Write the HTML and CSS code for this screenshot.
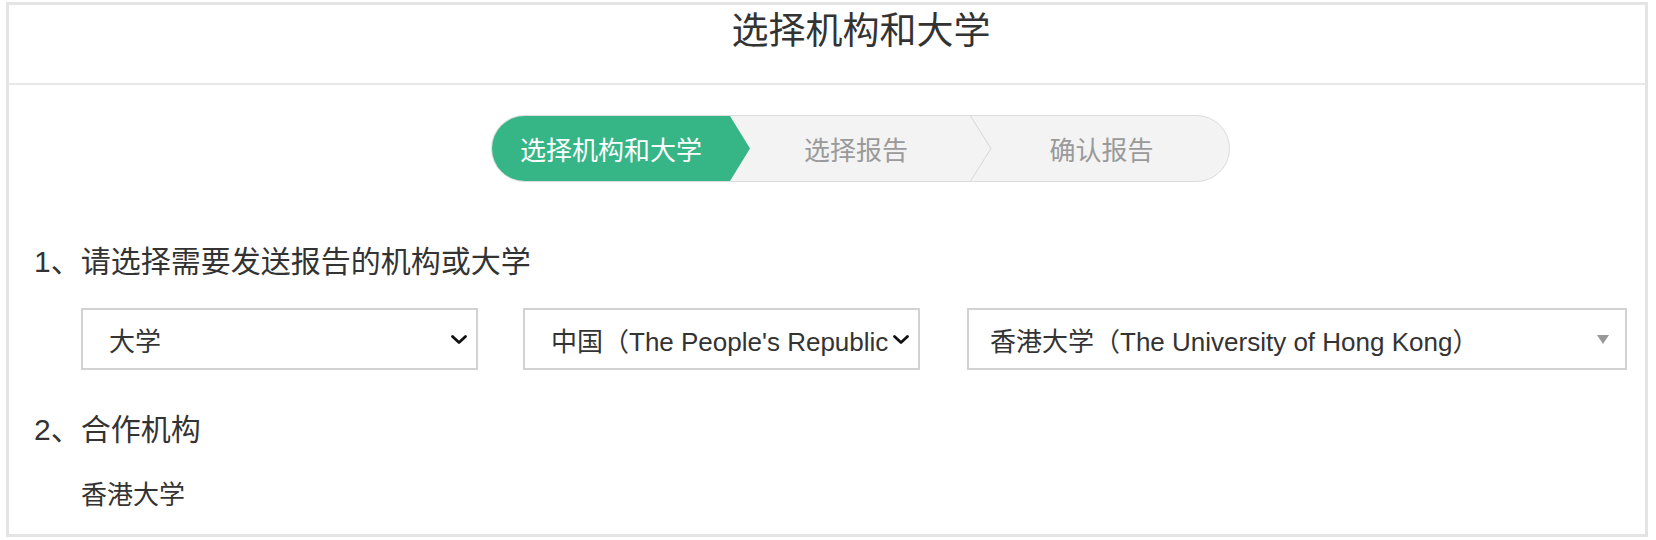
FILE: index.html
```html
<!DOCTYPE html>
<html lang="zh-CN">
<head>
<meta charset="utf-8">
<title>选择机构和大学</title>
<link rel="stylesheet" href="styles.css">
</head>
<body>
<div class="card">
  <div class="card-header">
    <h1 class="title">选择机构和大学</h1>
  </div>
  <div class="card-body">
    <div class="stepper-wrap">
      <div class="stepper">
        <div class="step step-active">选择机构和大学</div>
        <div class="step step-2">选择报告
          <svg class="step-sep" width="22" height="65" viewBox="0 0 22 65"><polyline points="0.5,0 21,32.5 0.5,65" fill="none" stroke="#d6d6d6" stroke-width="1"/></svg>
        </div>
        <div class="step step-3">确认报告</div>
      </div>
    </div>

    <h2 class="section-title">1、请选择需要发送报告的机构或大学</h2>
    <div class="select-row">
      <div class="select select-sm">
        <span class="select-text">大学</span>
        <svg class="chevron" width="18" height="11" viewBox="0 0 18 11"><polyline points="2.5,2.5 9,8.5 15.5,2.5" fill="none" stroke="#111" stroke-width="2.8" stroke-linecap="round" stroke-linejoin="round"/></svg>
      </div>
      <div class="select select-sm">
        <span class="select-text">中国（The People's Republic of China）</span>
        <svg class="chevron" width="18" height="11" viewBox="0 0 18 11"><polyline points="2.5,2.5 9,8.5 15.5,2.5" fill="none" stroke="#111" stroke-width="2.8" stroke-linecap="round" stroke-linejoin="round"/></svg>
      </div>
      <div class="select select-lg">
        <span class="select-text">香港大学（The University of Hong Kong）</span>
        <span class="caret"></span>
      </div>
    </div>

    <h2 class="section-title section-title-2">2、合作机构</h2>
    <p class="partner">香港大学</p>
  </div>
</div>
</body>
</html>
```

FILE: styles.css
```css
* { box-sizing: border-box; }
html, body { margin: 0; padding: 0; background: #fff; }
body {
  font-family: "Liberation Sans", Arial, "Noto Sans CJK SC", sans-serif;
  color: #333;
}
.card {
  margin: 2px 0 0 6px;
  width: 1642px;
  height: 535px;
  border: 3px solid #e4e4e4;
  background: #fff;
  display: flex;
  flex-direction: column;
}
.card-header {
  height: 80px;
  border-bottom: 2px solid #e8e8e8;
  padding-left: 68px;
  display: flex;
  justify-content: center;
}
.title {
  margin: 0;
  font-size: 37px;
  line-height: 47px;
  font-weight: normal;
  color: #333;
  font-family: "Noto Sans CJK SC", sans-serif;
}
.card-body {
  padding: 30px 18px 0 25px;
  display: flex;
  flex-direction: column;
}
.stepper-wrap {
  display: flex;
  justify-content: flex-start;
  padding-left: 457px;
}
.stepper {
  width: 739px;
  height: 67px;
  border: 1px solid #dcdcdc;
  border-radius: 34px;
  background: #f3f3f3;
  overflow: hidden;
  display: flex;
}
.step {
  display: flex;
  align-items: center;
  justify-content: center;
  font-family: "Noto Sans CJK SC", sans-serif;
  font-size: 26px;
  color: #9a9a9a;
  position: relative;
  height: 100%;
}
.step-active {
  width: 258px;
  flex: none;
  background: #36b586;
  color: #fff;
  padding-right: 20px;
  clip-path: polygon(0 0, calc(100% - 20px) 0, 100% 50%, calc(100% - 20px) 100%, 0 100%);
}
.step-2 {
  width: 242px;
  flex: none;
  padding-right: 30px;
}
.step-sep {
  position: absolute;
  right: 0;
  top: 0;
}
.step-3 {
  flex: 1;
  padding-right: 18px;
}
.section-title {
  margin: 60px 0 0 0;
  font-size: 30px;
  line-height: 40px;
  font-weight: normal;
  color: #333;
}
.section-title-2 {
  margin-top: 40px;
}
.select-row {
  display: flex;
  gap: 45px;
  margin: 26px 0 0 47px;
}
.select {
  height: 62px;
  border: 2px solid #d2d2d2;
  background: #fff;
  display: flex;
  align-items: center;
  padding: 0 8px 0 26px;
  font-size: 26px;
  color: #333;
}
.select-sm { width: 397px; flex: none; }
.select-lg { width: 660px; flex: none; margin-left: 2px; padding: 0 16px 0 21px; }
.select-text {
  flex: 1;
  white-space: nowrap;
  overflow: hidden;
}
.chevron { flex: none; margin-left: 3px; }
.caret {
  flex: none;
  width: 0;
  height: 0;
  border-left: 6px solid transparent;
  border-right: 6px solid transparent;
  border-top: 9px solid #999;
}
.partner {
  margin: 28px 0 0 47px;
  font-size: 26px;
  line-height: 34px;
  color: #333;
}
```
